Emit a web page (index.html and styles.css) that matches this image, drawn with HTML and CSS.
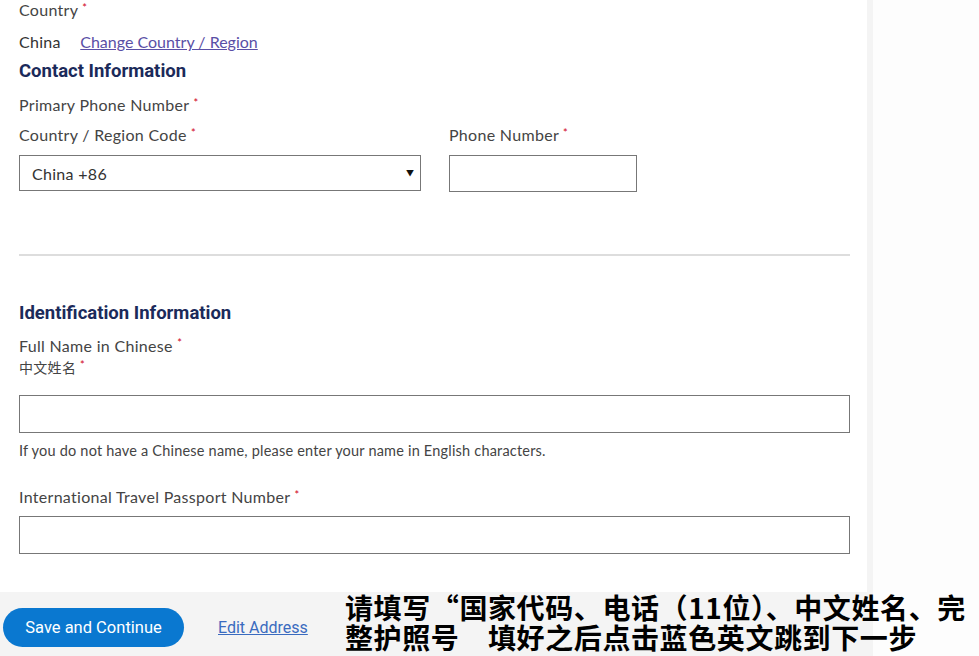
FILE: index.html
```html
<!doctype html>
<html lang="en">
<head>
    <meta charset="UTF-8"/>
    <meta name="viewport" content="width=device-width, initial-scale=1.0"/>
    <title>Shipping Details</title>
    <link rel="stylesheet" href="styles.css">
</head>
<body>
<div class="page">
    <div class="main">
        <div class="label">Country <span class="req">*</span></div>
        <div class="country-row">
            <span>China</span>
            <a href="#" class="change-link">Change Country / Region</a>
        </div>

        <h2 class="section-title contact-title">Contact Information</h2>
        <div class="label primary-phone">Primary Phone Number <span class="req">*</span></div>
        <div class="phone-row">
            <div class="col col-code">
                <label class="label" for="region-code">Country / Region Code <span class="req">*</span></label>
                <div class="select-wrap">
                    <select id="region-code" class="select">
                        <option>China +86</option>
                    </select>
                </div>
            </div>
            <div class="col col-phone">
                <label class="label" for="phone">Phone Number <span class="req">*</span></label>
                <input type="text" id="phone" class="input input-phone">
            </div>
        </div>

        <hr class="divider">

        <h2 class="section-title">Identification Information</h2>
        <div class="name-labels">
            <label class="label" for="cn-name">Full Name in Chinese <span class="req">*</span></label>
            <div class="label label-cn">中文姓名 <span class="req">*</span></div>
        </div>
        <input type="text" id="cn-name" class="input input-wide">
        <p class="help">If you do not have a Chinese name, please enter your name in English characters.</p>

        <label class="label passport-label" for="passport">International Travel Passport Number <span class="req">*</span></label>
        <input type="text" id="passport" class="input input-wide input-passport">
    </div>
    <div class="side-strip"></div>
</div>

<div class="footer">
    <button type="button" class="save-btn">Save and Continue</button>
    <a href="#" class="edit-link">Edit Address</a>
    <div class="note">请填写“国家代码、电话（11位）、中文姓名、完<br>整护照号　填好之后点击蓝色英文跳到下一步</div>
</div>
</body>
</html>
```

FILE: styles.css
```css
body {
    margin: 0;
    font-family: Lato, "Noto Sans CJK SC", sans-serif;
    color: #444;
    background: #fdfdfd;
}

.page {
    display: flex;
    width: 873px;
}

.main {
    width: 831px;
    padding: 0 17px 38px 19px;
    background: #fff;
}

.side-strip {
    width: 6px;
    background: #f4f4f4;
}

.label {
    display: block;
    font-size: 16px;
    letter-spacing: 0.3px;
    line-height: 20px;
    color: #444;
}

.req {
    color: #d0021b;
    font-size: 11px;
    vertical-align: top;
    line-height: 16px;
}

.country-row {
    margin-top: 12px;
    font-size: 16px;
    letter-spacing: 0.3px;
    line-height: 20px;
    color: #333;
}

.change-link {
    margin-left: 15px;
    letter-spacing: 0;
    color: #5a4fa6;
    text-decoration: underline;
}

.section-title {
    margin: 46px 0 0;
    font-family: Roboto, sans-serif;
    font-weight: 700;
    font-size: 18.5px;
    line-height: 22px;
    color: #1b2a5a;
}

.contact-title {
    margin-top: 8px;
}

.primary-phone {
    margin-top: 13px;
}

.phone-row {
    display: flex;
    gap: 28px;
    margin-top: 10px;
}

.col-code {
    width: 402px;
}

.col-phone {
    width: 188px;
}

.select-wrap {
    position: relative;
    margin-top: 10px;
}

.select-wrap::after {
    content: "▼";
    position: absolute;
    right: 7px;
    top: 12px;
    font-size: 8px;
    line-height: 12px;
    color: #111;
    pointer-events: none;
}

.select {
    display: block;
    width: 100%;
    height: 36px;
    margin: 0;
    padding: 0 12px;
    border: 1px solid #777;
    border-radius: 0;
    background: #fff;
    font-family: Lato, sans-serif;
    font-size: 16px;
    letter-spacing: 0.3px;
    color: #333;
    appearance: none;
    -webkit-appearance: none;
}

.input {
    display: block;
    box-sizing: border-box;
    margin: 0;
    border: 1px solid #777;
    border-radius: 0;
    background: #fff;
    font-family: Lato, sans-serif;
    font-size: 15px;
}

.input-phone {
    width: 188px;
    height: 37px;
    margin-top: 10px;
}

.input-wide {
    width: 831px;
    height: 38px;
    margin-top: 16px;
}

.divider {
    margin: 62px 0 0;
    border: none;
    height: 2px;
    background: #ddd;
}

.name-labels {
    margin-top: 11px;
}

.name-labels .label {
    line-height: 22px;
}

.label-cn {
    font-size: 14px;
}

.help {
    margin: 8px 0 0;
    font-size: 14.5px;
    letter-spacing: 0.2px;
    line-height: 20px;
    color: #444;
}

.passport-label {
    margin-top: 26px;
}

.input-passport {
    margin-top: 9px;
}

.footer {
    position: relative;
    display: flex;
    align-items: center;
    width: 870px;
    height: 64px;
    padding-left: 3px;
    background: #f4f4f4;
}

.save-btn {
    width: 181px;
    height: 39px;
    margin-top: 7px;
    border: none;
    border-radius: 20px;
    background: #0a78d0;
    color: #fff;
    font-family: Roboto, sans-serif;
    font-size: 16.5px;
    cursor: pointer;
}

.edit-link {
    margin: 7px 0 0 34px;
    font-family: Roboto, sans-serif;
    font-size: 16px;
    color: #3a6bbf;
    text-decoration: underline;
}

.note {
    position: absolute;
    left: 345px;
    top: 0;
    font-family: "Noto Sans CJK SC", sans-serif;
    font-weight: 700;
    font-size: 28px;
    line-height: 30px;
    letter-spacing: 0.6px;
    color: #000;
    white-space: nowrap;
}
```
